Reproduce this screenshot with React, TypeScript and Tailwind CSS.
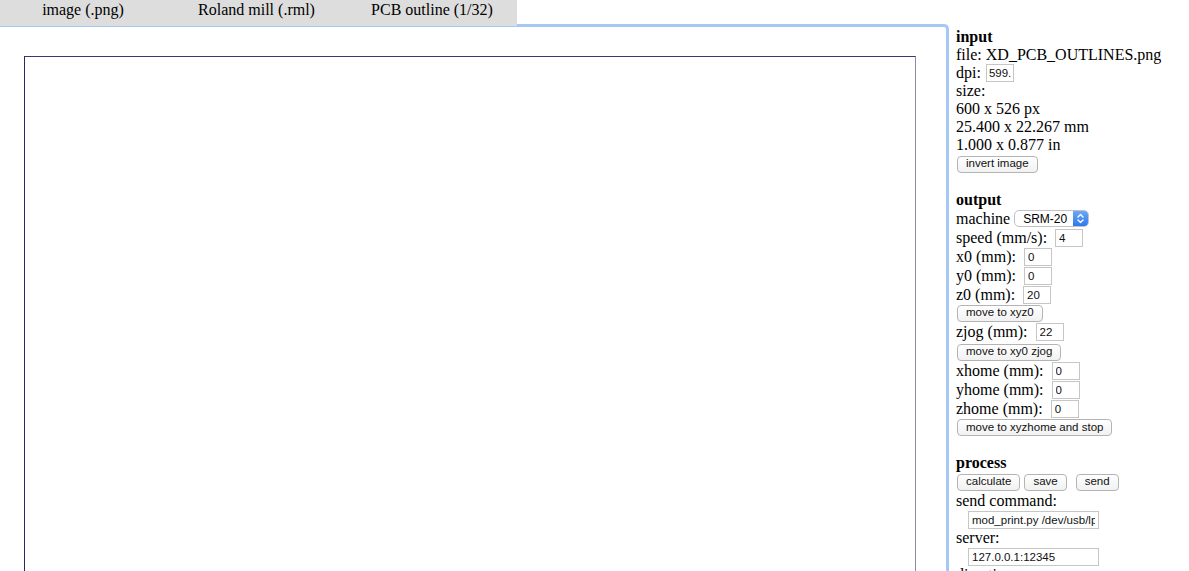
import React from "react";

const serif = { fontFamily: '"Liberation Serif", "Times New Roman", serif' };

function Btn({ children, className = "" }: { children: React.ReactNode; className?: string }) {
  return (
    <span
      className={
        "inline-flex h-[17px] items-center rounded-[4px] border border-[#b4b4b4] bg-gradient-to-b from-white to-[#f1f1f1] px-[8px] text-[11.5px] leading-none text-[#111] font-['Liberation_Sans',Arial,sans-serif] " +
        className
      }
    >
      {children}
    </span>
  );
}

function Inp({ value, className = "" }: { value: string; className?: string }) {
  return (
    <input
      readOnly
      value={value}
      className={
        "h-[18px] border border-[#c6c6c6] bg-white text-[11.5px] text-[#111] outline-none font-['Liberation_Sans',Arial,sans-serif] " +
        className
      }
    />
  );
}

export default function App() {
  return (
    <div className="relative h-[571px] w-[1189px] overflow-hidden bg-white text-black" style={serif}>
      {/* tab bar */}
      <div className="relative z-10 flex h-[26px] w-[517px] bg-[#dddddd] text-[16px] leading-[18px]">
        <div className="flex w-[166px] justify-center pt-[1px]">image (.png)</div>
        <div className="flex w-[181px] justify-center pt-[1px]">Roland mill (.rml)</div>
        <div className="flex w-[170px] justify-center pt-[1px]">PCB outline (1/32)</div>
      </div>

      <div className="-mt-[2px] flex">
        {/* canvas pane */}
        <div className="h-[600px] w-[949px] shrink-0 rounded-tr-[5px] border-t-[3px] border-r-[3px] border-[#a6c8f4]">
          <div className="ml-[24px] mt-[29px] h-[560px] w-[892px] border-t border-l border-r border-t-[#3b3772] border-l-[#2c2766] border-r-[#8e8aab]" />
        </div>

        {/* control panel */}
        <div className="pl-[7px] pt-[4px] text-[16px] leading-[18px] whitespace-nowrap">
          <div className="flex h-[18px] items-center font-bold">input</div>
          <div className="flex h-[18px] items-center">file: XD_PCB_OUTLINES.png</div>
          <div className="flex h-[18px] items-center">
            dpi:<Inp value="599." className="ml-[5px] w-[28px] px-[2px]" />
          </div>
          <div className="flex h-[18px] items-center">size:</div>
          <div className="flex h-[18px] items-center">600 x 526 px</div>
          <div className="flex h-[18px] items-center">25.400 x 22.267 mm</div>
          <div className="flex h-[18px] items-center">1.000 x 0.877 in</div>
          <div className="flex h-[20px] items-center">
            <Btn className="ml-[1px]">invert image</Btn>
          </div>
          <div className="h-[17px]" />

          <div className="flex h-[18px] items-center font-bold">output</div>
          <div className="flex h-[19px] items-center">
            machine
            <div className="ml-[4px] flex h-[17px] w-[75px] items-center overflow-hidden rounded-[5px] border border-[#c2c2c2] bg-white font-['Liberation_Sans',Arial,sans-serif] text-[12px]">
              <span className="flex-1 pl-[8px] leading-none">SRM-20</span>
              <span className="flex h-full w-[15px] items-center justify-center bg-gradient-to-b from-[#6aa8f7] to-[#2f78ea]">
                <svg width="7" height="11" viewBox="0 0 7 11" fill="none" stroke="white" strokeWidth="1.4" strokeLinecap="round" strokeLinejoin="round">
                  <path d="M1 4 L3.5 1.5 L6 4" />
                  <path d="M1 7 L3.5 9.5 L6 7" />
                </svg>
              </span>
            </div>
          </div>
          <div className="flex h-[19px] items-center">
            speed (mm/s):<Inp value="4" className="ml-[8px] w-[28px] px-[3px]" />
          </div>
          <div className="flex h-[19px] items-center">
            x0 (mm):<Inp value="0" className="ml-[8px] w-[28px] px-[3px]" />
          </div>
          <div className="flex h-[19px] items-center">
            y0 (mm):<Inp value="0" className="ml-[8px] w-[28px] px-[3px]" />
          </div>
          <div className="flex h-[19px] items-center">
            z0 (mm):<Inp value="20" className="ml-[8px] w-[28px] px-[3px]" />
          </div>
          <div className="flex h-[18px] items-center">
            <Btn className="ml-[1px]">move to xyz0</Btn>
          </div>
          <div className="flex h-[20px] items-center">
            zjog (mm):<Inp value="22" className="ml-[8px] w-[28px] px-[3px]" />
          </div>
          <div className="flex h-[20px] items-center">
            <Btn className="ml-[1px]">move to xy0 zjog</Btn>
          </div>
          <div className="flex h-[18px] items-center">
            xhome (mm):<Inp value="0" className="ml-[8px] w-[28px] px-[3px]" />
          </div>
          <div className="flex h-[19px] items-center">
            yhome (mm):<Inp value="0" className="ml-[8px] w-[28px] px-[3px]" />
          </div>
          <div className="flex h-[19px] items-center">
            zhome (mm):<Inp value="0" className="ml-[8px] w-[28px] px-[3px]" />
          </div>
          <div className="flex h-[19px] items-center">
            <Btn className="ml-[1px]">move to xyzhome and stop</Btn>
          </div>
          <div className="h-[17px]" />

          <div className="flex h-[18px] items-center font-bold">process</div>
          <div className="flex h-[20px] items-center">
            <Btn className="ml-[1px]">calculate</Btn>
            <Btn className="ml-[4px]">save</Btn>
            <Btn className="ml-[9px]">send</Btn>
          </div>
          <div className="flex h-[18px] items-center">send command:</div>
          <div className="flex h-[19px] items-center">
            <Inp value="mod_print.py /dev/usb/lp0" className="ml-[12px] w-[131px] px-[3px]" />
          </div>
          <div className="flex h-[18px] items-center">server:</div>
          <div className="flex h-[19px] items-center">
            <Inp value="127.0.0.1:12345" className="ml-[12px] w-[131px] px-[3px]" />
          </div>
          <div className="flex h-[18px] items-center">direction:</div>
        </div>
      </div>
    </div>
  );
}
